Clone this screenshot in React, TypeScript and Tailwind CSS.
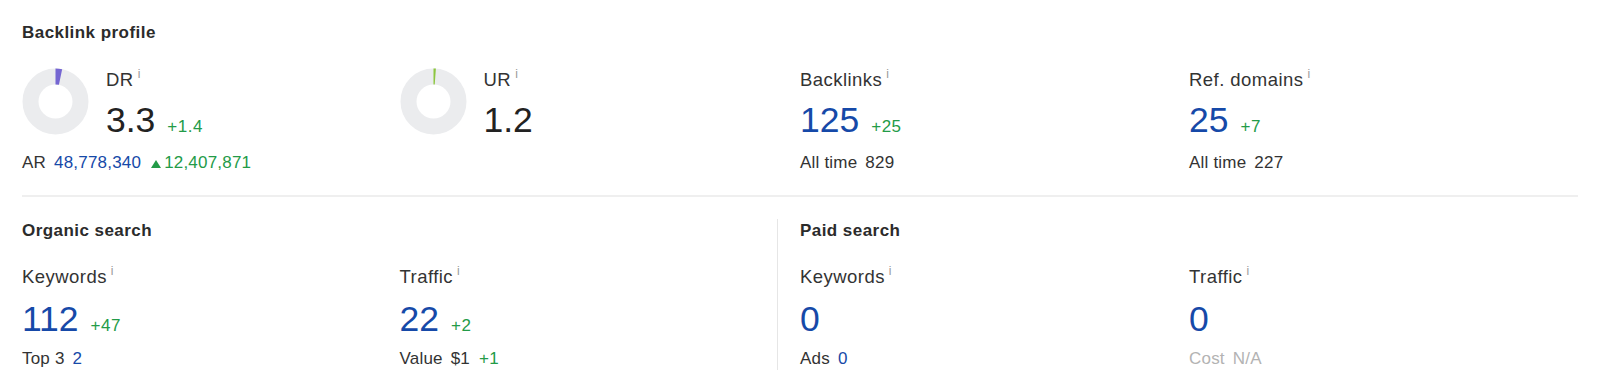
import React from "react";

const BLUE = "text-[#1649a8]";

function Info() {
  return <span className="ml-[4px] text-[12px] leading-none text-[#999999]">i</span>;
}

function Label({ children }: { children: React.ReactNode }) {
  return (
    <div className="flex items-start h-[24px]">
      <span className="text-[18.5px] leading-[24px] tracking-[0.45px] text-[#333333] whitespace-nowrap">
        {children}
      </span>
      <Info />
    </div>
  );
}

function Delta({ children }: { children: React.ReactNode }) {
  return (
    <span className="ml-[12px] text-[17px] leading-[22px] tracking-[0.5px] text-[#239b48]">{children}</span>
  );
}

function BigNum({ value, delta, blue = true, mt = "mt-[8px]" }: { value: string; delta?: string; blue?: boolean; mt?: string }) {
  return (
    <div className={`${mt} flex items-baseline h-[40px]`}>
      <span className={`text-[35.5px] leading-[40px] ${blue ? BLUE : "text-[#222222]"}`}>{value}</span>
      {delta && <Delta>{delta}</Delta>}
    </div>
  );
}

function Sub({ children, mt = "mt-[12px]" }: { children: React.ReactNode; mt?: string }) {
  return (
    <div className={`${mt} flex items-baseline h-[22px] text-[17px] leading-[22px] tracking-[0.2px] text-[#333333] whitespace-nowrap`}>
      {children}
    </div>
  );
}

function Donut({ pct, color }: { pct: number; color: string }) {
  const r = 25;
  const c = 2 * Math.PI * r;
  const dash = (c * pct) / 100;
  return (
    <svg width="67" height="67" viewBox="0 0 67 67" className="shrink-0">
      <circle cx="33.5" cy="33.5" r={r} fill="none" stroke="#ebecee" strokeWidth="16" />
      <circle
        cx="33.5"
        cy="33.5"
        r={r}
        fill="none"
        stroke={color}
        strokeWidth="16"
        strokeDasharray={`${dash} ${c}`}
        transform="rotate(-90 33.5 33.5)"
      />
    </svg>
  );
}

function Title({ children }: { children: React.ReactNode }) {
  return (
    <div className="h-[24px] text-[17px] leading-[24px] font-bold tracking-[0.45px] text-[#2b2b2b]">{children}</div>
  );
}

export default function App() {
  return (
    <div className="w-[1600px] h-[392px] bg-white px-[22px] pt-[21px] font-['Liberation_Sans',Arial,sans-serif] overflow-hidden">
      <Title>Backlink profile</Title>

      <div className="mt-[23px] grid grid-cols-[755px_1fr]">
        <div className="grid grid-cols-2">
          {/* DR */}
          <div>
            <div className="flex">
              <Donut pct={3.3} color="#7566d2" />
              <div className="ml-[17px]">
                <Label>DR</Label>
                <BigNum value="3.3" delta="+1.4" blue={false} />
              </div>
            </div>
            <Sub>
              <span>AR</span>
              <span className={`ml-[8px] ${BLUE}`}>48,778,340</span>
              <svg width="10" height="8" viewBox="0 0 10 8" className="ml-[10px] mr-[3px]">
                <polygon points="5,0 10,8 0,8" fill="#239b48" />
              </svg>
              <span className="text-[#239b48]">12,407,871</span>
            </Sub>
          </div>
          {/* UR */}
          <div>
            <div className="flex">
              <Donut pct={1.2} color="#8cc63f" />
              <div className="ml-[17px]">
                <Label>UR</Label>
                <BigNum value="1.2" blue={false} />
              </div>
            </div>
          </div>
        </div>
        <div className="grid grid-cols-2 border-l border-transparent pl-[22px]">
          <div>
            <Label>Backlinks</Label>
            <BigNum value="125" delta="+25" />
            <Sub>
              <span>All time</span>
              <span className="ml-[8px]">829</span>
            </Sub>
          </div>
          <div>
            <Label>Ref. domains</Label>
            <BigNum value="25" delta="+7" />
            <Sub>
              <span>All time</span>
              <span className="ml-[8px]">227</span>
            </Sub>
          </div>
        </div>
      </div>

      <div className="mt-[21px] h-[2px] bg-[#efefef]" />

      <div className="mt-[22px] grid grid-cols-[755px_1fr]">
        <div>
          <Title>Organic search</Title>
          <div className="mt-[22px] grid grid-cols-2">
            <div>
              <Label>Keywords</Label>
              <BigNum value="112" delta="+47" mt="mt-[10px]" />
              <Sub mt="mt-[9px]">
                <span>Top 3</span>
                <span className={`ml-[8px] ${BLUE}`}>2</span>
              </Sub>
            </div>
            <div>
              <Label>Traffic</Label>
              <BigNum value="22" delta="+2" mt="mt-[10px]" />
              <Sub mt="mt-[9px]">
                <span>Value</span>
                <span className="ml-[8px]">$1</span>
                <span className="ml-[9px] text-[#239b48]">+1</span>
              </Sub>
            </div>
          </div>
        </div>
        <div className="border-l border-[#e6e6e6] pl-[22px]">
          <Title>Paid search</Title>
          <div className="mt-[22px] grid grid-cols-2">
            <div>
              <Label>Keywords</Label>
              <BigNum value="0" mt="mt-[10px]" />
              <Sub mt="mt-[9px]">
                <span>Ads</span>
                <span className={`ml-[8px] ${BLUE}`}>0</span>
              </Sub>
            </div>
            <div>
              <Label>Traffic</Label>
              <BigNum value="0" mt="mt-[10px]" />
              <Sub mt="mt-[9px]">
                <span className="text-[#b3b3b3]">Cost</span>
                <span className="ml-[8px] text-[#b3b3b3]">N/A</span>
              </Sub>
            </div>
          </div>
        </div>
      </div>
    </div>
  );
}
